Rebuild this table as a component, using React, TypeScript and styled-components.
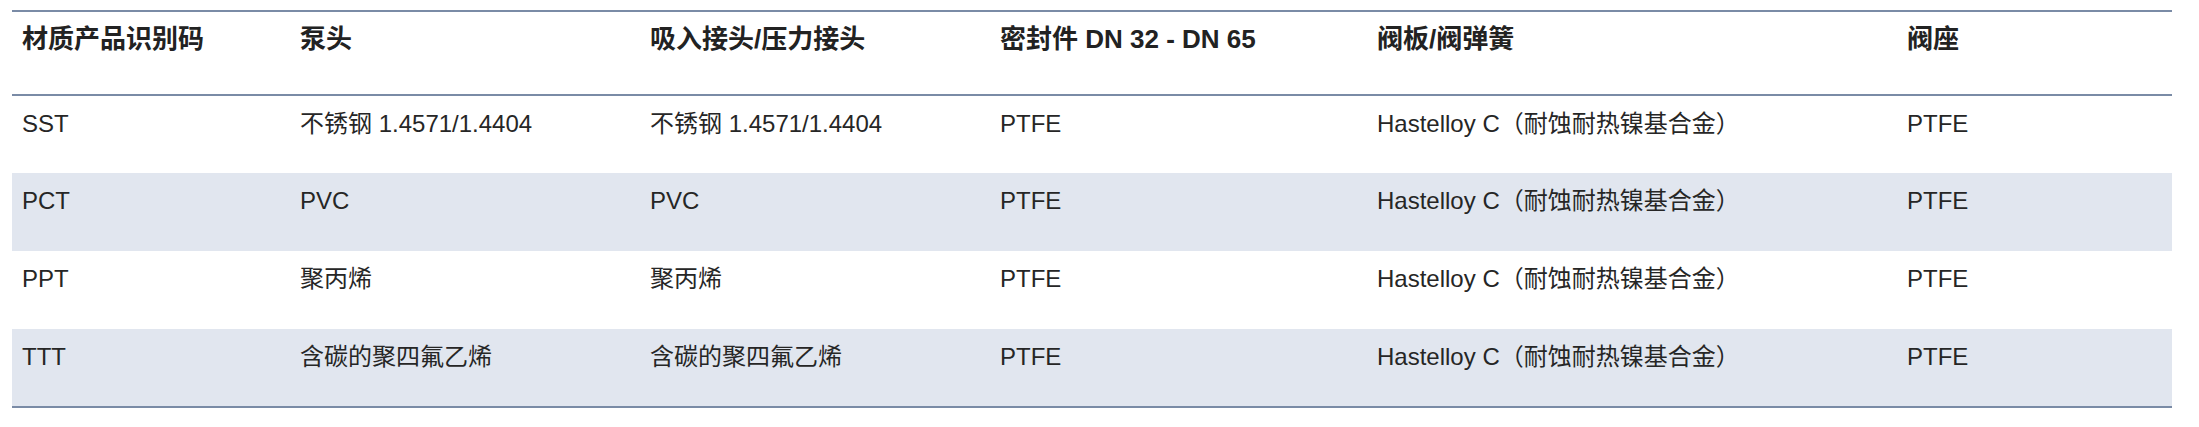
import React from "react";
import styled, { createGlobalStyle } from "styled-components";

const GlobalStyle = createGlobalStyle`
  html, body {
    margin: 0;
    padding: 0;
    background: #ffffff;
  }
  body {
    font-family: "Liberation Sans", Arial, "Noto Sans CJK SC", sans-serif;
    color: #222222;
  }
`;

const Page = styled.div`
  padding: 10px 27px 0 12px;
`;

const Table = styled.table`
  width: 2160px;
  border-collapse: collapse;
  table-layout: fixed;
  border-top: 2px solid #7a8ba6;
  border-bottom: 2px solid #7a8ba6;
`;

const HeadRow = styled.tr`
  height: 84px;
  border-bottom: 2px solid #7a8ba6;
`;

const HeadCell = styled.th`
  text-align: left;
  vertical-align: top;
  padding: 8px 10px 0 10px;
  font-size: 26px;
  line-height: 38px;
  font-weight: 700;
  color: #222222;
  white-space: nowrap;
`;

const BodyRow = styled.tr<{ $shaded: boolean }>`
  height: 78px;
  background: ${(p) => (p.$shaded ? "#e1e6ef" : "#ffffff")};
`;

const Cell = styled.td`
  vertical-align: top;
  padding: 10px 10px 0 10px;
  font-size: 24px;
  line-height: 36px;
  font-weight: 400;
  color: #262626;
  white-space: nowrap;
`;

const widths = [278, 350, 350, 377, 530, 275];

const headers = [
  "材质产品识别码",
  "泵头",
  "吸入接头/压力接头",
  "密封件 DN 32 - DN 65",
  "阀板/阀弹簧",
  "阀座",
];

const rows: string[][] = [
  ["SST", "不锈钢 1.4571/1.4404", "不锈钢 1.4571/1.4404", "PTFE", "Hastelloy C（耐蚀耐热镍基合金）", "PTFE"],
  ["PCT", "PVC", "PVC", "PTFE", "Hastelloy C（耐蚀耐热镍基合金）", "PTFE"],
  ["PPT", "聚丙烯", "聚丙烯", "PTFE", "Hastelloy C（耐蚀耐热镍基合金）", "PTFE"],
  ["TTT", "含碳的聚四氟乙烯", "含碳的聚四氟乙烯", "PTFE", "Hastelloy C（耐蚀耐热镍基合金）", "PTFE"],
];

export default function App() {
  return (
    <>
      <GlobalStyle />
      <Page>
        <Table>
          <colgroup>
            {widths.map((w, i) => (
              <col key={i} style={{ width: `${w}px` }} />
            ))}
          </colgroup>
          <thead>
            <HeadRow>
              {headers.map((h) => (
                <HeadCell key={h}>{h}</HeadCell>
              ))}
            </HeadRow>
          </thead>
          <tbody>
            {rows.map((r, i) => (
              <BodyRow key={r[0]} $shaded={i % 2 === 1}>
                {r.map((c, j) => (
                  <Cell key={j}>{c}</Cell>
                ))}
              </BodyRow>
            ))}
          </tbody>
        </Table>
      </Page>
    </>
  );
}
